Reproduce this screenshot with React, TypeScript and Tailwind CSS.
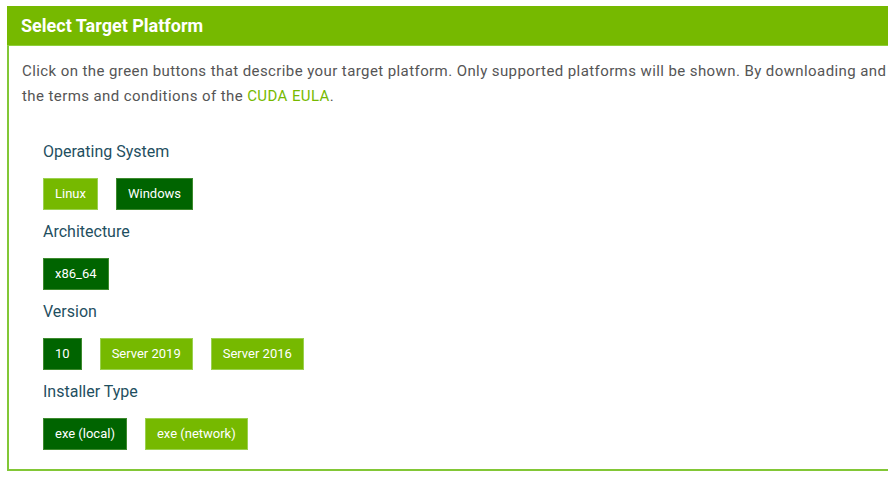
import React from "react";

type Opt = { label: string; on?: boolean };

const sections: { title: string; options: Opt[] }[] = [
  { title: "Operating System", options: [{ label: "Linux" }, { label: "Windows", on: true }] },
  { title: "Architecture", options: [{ label: "x86_64", on: true }] },
  {
    title: "Version",
    options: [{ label: "10", on: true }, { label: "Server 2019" }, { label: "Server 2016" }],
  },
  { title: "Installer Type", options: [{ label: "exe (local)", on: true }, { label: "exe (network)" }] },
];

function OptionButton({ label, on }: Opt) {
  return (
    <button
      className={
        on
          ? "h-[32px] px-[11px] text-[13px] text-white bg-[#006400] border border-[#3d8a2e]"
          : "h-[32px] px-[11px] text-[13px] text-white bg-[#76b900] border border-[#9bd14f]"
      }
    >
      {label}
    </button>
  );
}

export default function App() {
  return (
    <div className="w-[888px] h-[479px] overflow-hidden bg-white pt-[6px] pl-[7px] font-['Roboto',sans-serif]">
      <div className="w-[920px] border-l-2 border-b-2 border-[#82c736]">
        {/* header */}
        <div className="h-[40px] bg-[#76b900] border-b border-[#8fcf3a] flex items-center pl-[14px] -ml-[2px]">
          <h2 className="text-[18px] font-bold text-white">Select Target Platform</h2>
        </div>

        <div className="pl-[13px] pt-[13px] pb-[19px]">
          <p className="text-[15px] leading-[25px] tracking-[0.41px] text-[#555] whitespace-nowrap">
            Click on the green buttons that describe your target platform. Only supported platforms will be shown. By downloading and
            <br />
            the terms and conditions of the <span className="text-[#76b900]">CUDA EULA</span>.
          </p>

          <div className="pl-[21px] pt-[33px] flex flex-col gap-[12px]">
            {sections.map((s) => (
              <div key={s.title} className="flex flex-col">
                <div className="text-[16px] leading-[20px] text-[#1f4f5f]">{s.title}</div>
                <div className="flex gap-[18px] mt-[16px]">
                  {s.options.map((o) => (
                    <OptionButton key={o.label} {...o} />
                  ))}
                </div>
              </div>
            ))}
          </div>
        </div>
      </div>
    </div>
  );
}
